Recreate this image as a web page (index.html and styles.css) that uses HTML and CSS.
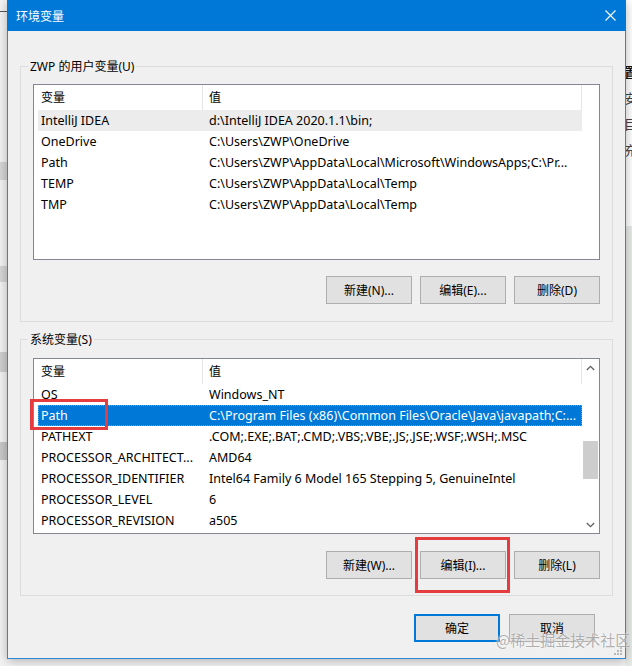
FILE: index.html
```html
<!DOCTYPE html>
<html lang="zh-CN">
<head>
<meta charset="utf-8">
<title>环境变量</title>
<link rel="stylesheet" href="styles.css">
</head>
<body>
<div class="desktop">
  <div class="bg-left">
    <div class="bl bl-a"></div>
    <div class="bl bl-b"></div>
    <div class="bl bl-c"></div>
    <div class="bl bl-d"></div>
    <div class="bl bl-e"></div>
  </div>
  <div class="bg-right">
    <div class="br-top">
      <span class="br-ch br-bold">置</span>
      <span class="br-ch">安</span>
      <span class="br-ch">目</span>
      <span class="br-ch">充</span>
    </div>
    <div class="br-bottom"></div>
  </div>

  <div class="dialog">
    <div class="titlebar">
      <span class="title">环境变量</span>
      <svg class="close" width="11" height="11" viewBox="0 0 11 11"><path d="M0.5 0.5 L10.5 10.5 M10.5 0.5 L0.5 10.5" stroke="#fff" stroke-width="1.1" fill="none"/></svg>
    </div>
    <div class="body">
      <div class="group group-user">
        <span class="legend">ZWP 的用户变量(U)</span>
        <div class="list">
          <div class="list-main">
            <div class="row head"><span class="c1">变量</span><span class="c2">值</span></div>
            <div class="row hot"><span class="c1">IntelliJ IDEA</span><span class="c2">d:\IntelliJ IDEA 2020.1.1\bin;</span></div>
            <div class="row"><span class="c1">OneDrive</span><span class="c2">C:\Users\ZWP\OneDrive</span></div>
            <div class="row"><span class="c1">Path</span><span class="c2">C:\Users\ZWP\AppData\Local\Microsoft\WindowsApps;C:\Pr...</span></div>
            <div class="row"><span class="c1">TEMP</span><span class="c2">C:\Users\ZWP\AppData\Local\Temp</span></div>
            <div class="row"><span class="c1">TMP</span><span class="c2">C:\Users\ZWP\AppData\Local\Temp</span></div>
          </div>
          <div class="vscroll blank"></div>
        </div>
        <div class="btns">
          <button class="btn">新建(N)...</button>
          <button class="btn">编辑(E)...</button>
          <button class="btn">删除(D)</button>
        </div>
      </div>

      <div class="group group-sys">
        <span class="legend">系统变量(S)</span>
        <div class="list">
          <div class="list-main">
            <div class="row head"><span class="c1">变量</span><span class="c2">值</span></div>
            <div class="row"><span class="c1">OS</span><span class="c2">Windows_NT</span></div>
            <div class="row sel"><span class="c1">Path</span><span class="c2">C:\Program Files (x86)\Common Files\Oracle\Java\javapath;C:...</span></div>
            <div class="row"><span class="c1">PATHEXT</span><span class="c2">.COM;.EXE;.BAT;.CMD;.VBS;.VBE;.JS;.JSE;.WSF;.WSH;.MSC</span></div>
            <div class="row"><span class="c1">PROCESSOR_ARCHITECT...</span><span class="c2">AMD64</span></div>
            <div class="row"><span class="c1">PROCESSOR_IDENTIFIER</span><span class="c2">Intel64 Family 6 Model 165 Stepping 5, GenuineIntel</span></div>
            <div class="row"><span class="c1">PROCESSOR_LEVEL</span><span class="c2">6</span></div>
            <div class="row"><span class="c1">PROCESSOR_REVISION</span><span class="c2">a505</span></div>
          </div>
          <div class="vscroll">
            <div class="arrow"><svg width="9" height="6" viewBox="0 0 9 6"><path d="M0.8 5 L4.5 1.3 L8.2 5" stroke="#606060" stroke-width="1.3" fill="none"/></svg></div>
            <div class="track"><div class="thumb"></div></div>
            <div class="arrow"><svg width="9" height="6" viewBox="0 0 9 6"><path d="M0.8 1 L4.5 4.7 L8.2 1" stroke="#606060" stroke-width="1.3" fill="none"/></svg></div>
          </div>
        </div>
        <div class="btns">
          <button class="btn">新建(W)...</button>
          <button class="btn">编辑(I)...</button>
          <button class="btn">删除(L)</button>
        </div>
      </div>

      <div class="footer">
        <button class="btn default">确定</button>
        <button class="btn">取消</button>
      </div>
    </div>
    <svg class="grip" width="9" height="9" viewBox="0 0 9 9">
      <rect x="6" y="0" width="2" height="2" fill="#b8b8b8"/>
      <rect x="3" y="3" width="2" height="2" fill="#b8b8b8"/>
      <rect x="6" y="3" width="2" height="2" fill="#b8b8b8"/>
      <rect x="0" y="6" width="2" height="2" fill="#b8b8b8"/>
      <rect x="3" y="6" width="2" height="2" fill="#b8b8b8"/>
      <rect x="6" y="6" width="2" height="2" fill="#b8b8b8"/>
    </svg>
  </div>

  <div class="mark mark-path"></div>
  <div class="mark mark-edit"></div>
  <div class="watermark">@稀土掘金技术社区</div>
</div>
</body>
</html>
```

FILE: styles.css
```css
* { box-sizing: border-box; }

html, body {
  margin: 0;
  padding: 0;
}

body {
  width: 632px;
  height: 666px;
  overflow: hidden;
  font-family: "Noto Sans", "Noto Sans CJK SC", sans-serif;
  font-size: 12px;
  color: #000;
}

.desktop {
  position: relative;
  width: 632px;
  height: 666px;
  background: #f4f4f4;
  display: flex;
  justify-content: space-between;
  overflow: hidden;
}

/* background windows */
.bg-left {
  width: 7px;
  height: 100%;
  background: #f3f3f3;
  display: flex;
  flex-direction: column;
  border-top: 1px solid transparent;
}
.bl { background: #d6d6d6; }
.bl-a { height: 1px; margin-top: 10px; background: #555; }
.bl-b { height: 18px; margin-top: 150px; }
.bl-c { height: 16px; margin-top: 86px; }
.bl-d { height: 20px; margin-top: 70px; background: #cfcfcf; }
.bl-e { height: 18px; margin-top: 70px; background: #c8c8c8; }

.bg-right {
  width: 7px;
  height: 100%;
  display: flex;
  flex-direction: column;
  overflow: hidden;
}
.br-top {
  height: 226px;
  background: #fff;
  display: flex;
  flex-direction: column;
  padding-top: 64px;
  gap: 10px;
}
.br-ch {
  font-family: "Noto Sans CJK SC", sans-serif;
  font-size: 13px;
  line-height: 16px;
  margin-left: -1px;
  color: #444;
  white-space: nowrap;
}
.br-bold { font-weight: 700; color: #111; }
.br-bottom { flex: 1; background: #e8ece9; }

/* dialog */
.dialog {
  position: absolute;
  left: 7px;
  top: 0;
  width: 619px;
  height: 659px;
  background: #f0f0f0;
  border: 1px solid #2b88d8;
  border-top: none;
  box-shadow: 0 2px 10px rgba(0, 0, 0, 0.28);
  display: flex;
  flex-direction: column;
}

.titlebar {
  height: 31px;
  margin: 0 -1px;
  background: #0078d7;
  color: #fff;
  display: flex;
  align-items: center;
  justify-content: space-between;
  padding: 0 10px 0 9px;
}
.title {
  font-family: "Noto Sans CJK SC", sans-serif;
  font-size: 12px;
  line-height: 16px;
}
.close { display: block; }

.body {
  padding: 35px 12px 0 12px;
  display: flex;
  flex-direction: column;
}

.group {
  position: relative;
  border: 1px solid #dcdcdc;
  padding: 17px 12px 17px 12px;
}
.group-sys {
  margin-top: 17px;
  padding-top: 18px;
  padding-bottom: 16px;
}
.legend {
  position: absolute;
  top: -9px;
  left: 7px;
  padding: 0 2px;
  background: #f0f0f0;
  line-height: 17px;
  white-space: nowrap;
}

.list {
  height: 176px;
  border: 1px solid #828790;
  background: #fff;
  display: flex;
  font-size: 12.5px;
}
.list-main {
  flex: 1;
  padding-left: 4px;
  overflow: hidden;
}
.row {
  height: 21px;
  display: flex;
  align-items: center;
  white-space: nowrap;
  line-height: 16px;
}
.row .c1 {
  width: 165px;
  flex: none;
  padding-left: 3px;
  overflow: hidden;
}
.row .c2 {
  flex: 1;
  padding-left: 6px;
  overflow: hidden;
}
.row.head {
  height: 25px;
  align-items: stretch;
  font-size: 12px;
}
.row.head .c1,
.row.head .c2 {
  display: flex;
  align-items: center;
  border-right: 1px solid #e5e5e5;
}
.row.hot { background: #ececec; }
.row.sel {
  background: #0078d7;
  color: #fff;
  outline: 1px dotted #5aa8e6;
  outline-offset: -1px;
}

.vscroll {
  width: 17px;
  flex: none;
  display: flex;
  flex-direction: column;
  background: #fff;
}
.arrow {
  height: 17px;
  display: flex;
  align-items: center;
  justify-content: center;
}
.arrow svg { display: block; }
.track {
  flex: 1;
  display: flex;
  flex-direction: column;
  align-items: center;
}
.thumb {
  width: 15px;
  height: 38px;
  margin-top: 65px;
  background: #cdcdcd;
}

.btns {
  margin-top: 16px;
  display: flex;
  justify-content: flex-end;
  gap: 8px;
}
.group-sys .btns { margin-top: 17px; }

.btn {
  width: 86px;
  height: 28px;
  margin: 0;
  padding: 0;
  background: #e1e1e1;
  border: 1px solid #adadad;
  font-family: "Noto Sans", "Noto Sans CJK SC", sans-serif;
  font-size: 12px;
  color: #000;
  display: flex;
  align-items: center;
  justify-content: center;
  white-space: nowrap;
}
.btn.default { border: 2px solid #0078d7; }

.footer {
  margin-top: 18px;
  padding-right: 18px;
  display: flex;
  justify-content: flex-end;
  gap: 9px;
}

.grip {
  position: absolute;
  right: 2px;
  bottom: 2px;
}

/* annotations over the screenshot */
.mark {
  position: absolute;
  border: 3px solid #e53c3f;
}
.mark-path { left: 30px; top: 399px; width: 78px; height: 31px; }
.mark-edit { left: 415px; top: 537px; width: 95px; height: 56px; }

.watermark {
  position: absolute;
  left: 496px;
  top: 630px;
  font-family: "Noto Sans CJK SC", sans-serif;
  font-size: 15px;
  line-height: 20px;
  color: rgba(150, 150, 150, 0.75);
  text-shadow: 0 0 2px #fff;
  white-space: nowrap;
}
```
